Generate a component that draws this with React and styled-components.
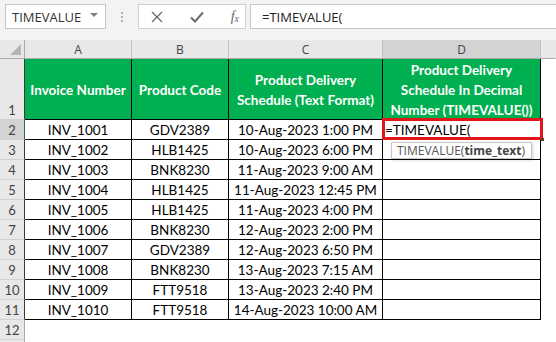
import React from 'react';
import styled, { createGlobalStyle } from 'styled-components';

const GlobalStyle = createGlobalStyle`
  html, body {
    margin: 0;
    padding: 0;
    background: #ffffff;
    overflow: hidden;
  }
`;

const Screen = styled.div`
  width: 556px;
  height: 342px;
  overflow: hidden;
  background: #ffffff;
  font-family: Lato, "Liberation Sans", sans-serif;
`;

const FormulaBar = styled.div`
  height: 40px;
  box-sizing: border-box;
  background: #f3f3f3;
  display: flex;
  align-items: flex-start;
  padding: 4px 0 0 5px;
`;

const NameBox = styled.div`
  width: 101px;
  height: 25px;
  box-sizing: border-box;
  background: #ffffff;
  border: 1px solid #c6c6c6;
  display: flex;
  align-items: center;
  justify-content: space-between;
  padding: 0 7px 0 6px;
  font-family: "Open Sans", sans-serif;
  font-size: 13px;
  color: #333333;
`;

const Caret = styled.span`
  width: 0;
  height: 0;
  border-left: 4px solid transparent;
  border-right: 4px solid transparent;
  border-top: 4px solid #808080;
  margin-top: -3px;
`;

const Grip = styled.div`
  width: 32px;
  height: 25px;
  display: flex;
  flex-direction: column;
  align-items: center;
  justify-content: center;
  gap: 2px;
  span {
    width: 2px;
    height: 2px;
    background: #b0b0b0;
  }
`;

const Buttons = styled.div`
  width: 108px;
  height: 25px;
  box-sizing: border-box;
  background: #ffffff;
  border: 1px solid #d0d0d0;
  display: flex;
  align-items: center;
  padding: 0 6px 0 12px;
  justify-content: space-between;
`;

const FxLabel = styled.span`
  font-family: "Liberation Serif", serif;
  font-style: italic;
  font-size: 14px;
  color: #6a6a6a;
  sub {
    font-size: 10px;
    vertical-align: -1px;
  }
`;

const FormulaInput = styled.div`
  flex: 1;
  height: 25px;
  margin-left: 4px;
  box-sizing: border-box;
  background: #ffffff;
  border: 1px solid #c6c6c6;
  border-right: none;
  display: flex;
  align-items: center;
  padding-left: 11px;
  font-family: "Open Sans", sans-serif;
  font-size: 13px;
  color: #222222;
`;

const Sheet = styled.div`
  display: grid;
  grid-template-columns: 25px 107px 97px 154px 158px 1fr;
  grid-template-rows: 19px 61px repeat(12, 20px);
`;

const Corner = styled.div`
  position: relative;
  background: #e8e8e8;
  border-right: 1px solid #ababab;
  border-bottom: 1px solid #ababab;
  &::after {
    content: '';
    position: absolute;
    right: 3px;
    bottom: 3px;
    width: 0;
    height: 0;
    border-left: 11px solid transparent;
    border-bottom: 11px solid #b4b4b4;
  }
`;

const ColHead = styled.div`
  background: ${(p) => (p.$selected ? '#d3d3d3' : '#e8e8e8')};
  border-right: 1px solid ${(p) => (p.$last ? 'transparent' : '#c4c4c4')};
  border-bottom: 1px solid #ababab;
  display: flex;
  align-items: center;
  justify-content: center;
  font-family: "Open Sans", sans-serif;
  font-size: 12px;
  color: #444444;
`;

const RowHead = styled.div`
  background: ${(p) => (p.$selected ? '#d3d3d3' : '#e8e8e8')};
  border-right: 1px solid ${(p) => (p.$selected ? '#217346' : p.$inTable ? '#3a3a3a' : '#ababab')};
  border-bottom: 1px solid #d0d0d0;
  display: flex;
  align-items: ${(p) => (p.$bottom ? 'flex-end' : 'center')};
  justify-content: center;
  padding-bottom: ${(p) => (p.$bottom ? '1px' : '0')};
  font-size: 13px;
  color: #444444;
`;

const Cell = styled.div`
  position: relative;
  background: ${(p) => (p.$head ? '#00b050' : '#ffffff')};
  color: ${(p) => (p.$head ? '#ffffff' : '#000000')};
  font-weight: ${(p) => (p.$head ? 700 : 400)};
  border-right: 1px solid #000000;
  border-bottom: 1px solid #000000;
  display: flex;
  align-items: center;
  justify-content: ${(p) => (p.$left ? 'flex-start' : 'center')};
  text-align: center;
  padding: ${(p) => (p.$head ? '2px 2px 0' : '0 2px')};
  font-size: 13.5px;
  line-height: 20px;
  white-space: nowrap;
`;

const Blank = styled.div`
  background: #ffffff;
`;

const RedBox = styled.div`
  position: absolute;
  left: -1px;
  top: -2px;
  right: -3px;
  bottom: -1px;
  border: 3px solid #e0161b;
  pointer-events: none;
`;

const FillHandle = styled.div`
  position: absolute;
  right: -4px;
  bottom: -2px;
  width: 3px;
  height: 3px;
  background: #6b3d1f;
`;

const Tip = styled.div`
  position: absolute;
  left: 8px;
  top: 22px;
  z-index: 2;
  height: 17px;
  box-sizing: border-box;
  padding: 0 6px 0 5px;
  display: flex;
  align-items: center;
  background: #ffffff;
  border: 1px solid #c8c8c8;
  box-shadow: 1px 1px 3px rgba(0, 0, 0, 0.18);
  font-family: "Open Sans", sans-serif;
  font-size: 12px;
  font-weight: 400;
  color: #555555;
  b {
    font-weight: 700;
    color: #444444;
  }
`;

const rows = [
  ['INV_1001', 'GDV2389', '10-Aug-2023 1:00 PM'],
  ['INV_1002', 'HLB1425', '10-Aug-2023 6:00 PM'],
  ['INV_1003', 'BNK8230', '11-Aug-2023 9:00 AM'],
  ['INV_1004', 'HLB1425', '11-Aug-2023 12:45 PM'],
  ['INV_1005', 'HLB1425', '11-Aug-2023 4:00 PM'],
  ['INV_1006', 'BNK8230', '12-Aug-2023 2:00 PM'],
  ['INV_1007', 'GDV2389', '12-Aug-2023 6:50 PM'],
  ['INV_1008', 'BNK8230', '13-Aug-2023 7:15 AM'],
  ['INV_1009', 'FTT9518', '13-Aug-2023 2:40 PM'],
  ['INV_1010', 'FTT9518', '14-Aug-2023 10:00 AM'],
];

function CrossIcon() {
  return (
    <svg width="12" height="12" viewBox="0 0 12 12">
      <path d="M1 1 L11 11 M11 1 L1 11" stroke="#6a6a6a" strokeWidth="1.3" fill="none" />
    </svg>
  );
}

function CheckIcon() {
  return (
    <svg width="14" height="12" viewBox="0 0 14 12">
      <path d="M1 6.5 L5 10.5 L13 1.5" stroke="#6a6a6a" strokeWidth="2" fill="none" />
    </svg>
  );
}

export default function App() {
  return (
    <Screen>
      <GlobalStyle />
      <FormulaBar>
        <NameBox>
          TIMEVALUE
          <Caret />
        </NameBox>
        <Grip>
          <span />
          <span />
          <span />
        </Grip>
        <Buttons>
          <CrossIcon />
          <CheckIcon />
          <FxLabel>
            f<sub>x</sub>
          </FxLabel>
        </Buttons>
        <FormulaInput>=TIMEVALUE(</FormulaInput>
      </FormulaBar>

      <Sheet>
        <Corner />
        <ColHead>A</ColHead>
        <ColHead>B</ColHead>
        <ColHead>C</ColHead>
        <ColHead $selected>D</ColHead>
        <ColHead $last />

        <RowHead $bottom $inTable>1</RowHead>
        <Cell $head>Invoice Number</Cell>
        <Cell $head>Product Code</Cell>
        <Cell $head>
          Product Delivery
          <br />
          Schedule (Text Format)
        </Cell>
        <Cell $head>
          Product Delivery
          <br />
          Schedule In Decimal
          <br />
          Number (TIMEVALUE())
        </Cell>
        <Blank />

        {rows.map((r, i) => (
          <React.Fragment key={r[0]}>
            <RowHead $inTable $selected={i === 0}>{i + 2}</RowHead>
            <Cell>{r[0]}</Cell>
            <Cell>{r[1]}</Cell>
            <Cell>{r[2]}</Cell>
            {i === 0 ? (
              <Cell $left>
                =TIMEVALUE(
                <RedBox />
                <FillHandle />
                <Tip>
                  TIMEVALUE(<b>time_text</b>)
                </Tip>
              </Cell>
            ) : (
              <Cell />
            )}
            <Blank />
          </React.Fragment>
        ))}

        <RowHead>12</RowHead>
        <Blank />
        <Blank />
        <Blank />
        <Blank />
        <Blank />
        <RowHead />
      </Sheet>
    </Screen>
  );
}
